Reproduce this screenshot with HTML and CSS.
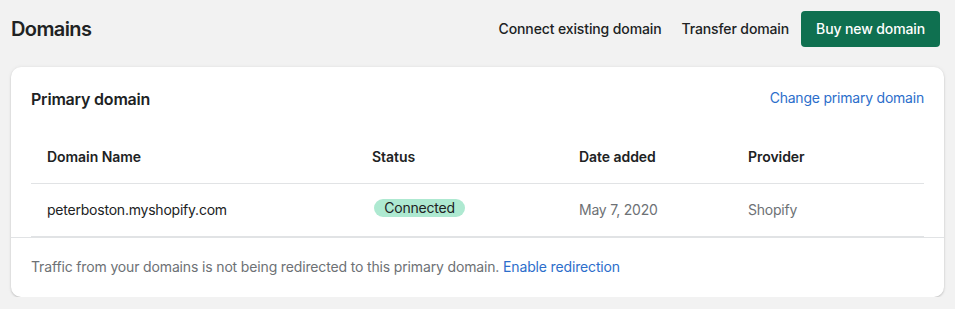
FILE: index.html
```html
<!DOCTYPE html>
<html lang="en">
<head>
<meta charset="utf-8">
<title>Domains</title>
<link rel="stylesheet" href="styles.css">
</head>
<body>
<div class="page">
  <header class="page-header">
    <h1 class="page-title">Domains</h1>
    <div class="actions">
      <button class="plain-btn">Connect existing domain</button>
      <button class="plain-btn">Transfer domain</button>
      <button class="primary-btn">Buy new domain</button>
    </div>
  </header>

  <section class="card">
    <div class="card-header">
      <h2 class="card-title">Primary domain</h2>
      <a class="link" href="#">Change primary domain</a>
    </div>
    <div class="table">
      <div class="row head">
        <div class="cell">Domain Name</div>
        <div class="cell">Status</div>
        <div class="cell">Date added</div>
        <div class="cell">Provider</div>
      </div>
      <div class="row body">
        <div class="cell">peterboston.myshopify.com</div>
        <div class="cell"><span class="badge">Connected</span></div>
        <div class="cell muted">May 7, 2020</div>
        <div class="cell muted">Shopify</div>
      </div>
    </div>
    <div class="card-footer">
      Traffic from your domains is not being redirected to this primary domain. <a class="link" href="#">Enable redirection</a>
    </div>
  </section>
</div>
</body>
</html>
```

FILE: styles.css
```css
* { box-sizing: border-box; }

html, body {
  margin: 0;
  padding: 0;
  background: #f2f2f2;
}

body {
  font-family: Inter, "Noto Sans", sans-serif;
  font-size: 14px;
  line-height: 20px;
  letter-spacing: -0.22px;
  color: #202223;
}

.page {
  padding: 11px 11px 0 11px;
}

.page-header {
  display: flex;
  align-items: center;
  justify-content: space-between;
  height: 36px;
  padding-right: 4px;
}

.page-title {
  margin: 0;
  font-size: 20px;
  line-height: 28px;
  font-weight: 600;
  letter-spacing: -0.6px;
  color: #202223;
}

.actions {
  display: flex;
  align-items: center;
}

.plain-btn {
  font-family: inherit;
  font-size: 14px;
  font-weight: 500;
  line-height: 20px;
  letter-spacing: -0.12px;
  color: #202223;
  background: none;
  border: 0;
  padding: 0;
  margin-right: 20px;
  white-space: nowrap;
  cursor: pointer;
}

.plain-btn + .plain-btn {
  margin-right: 12px;
}

.primary-btn {
  font-family: inherit;
  font-size: 14px;
  font-weight: 500;
  line-height: 20px;
  letter-spacing: -0.12px;
  color: #fff;
  background: #0f7050;
  border: 0;
  border-radius: 4px;
  height: 36px;
  padding: 0 15px;
  white-space: nowrap;
  cursor: pointer;
}

.card {
  margin-top: 20px;
  background: #fff;
  border-radius: 10px;
  box-shadow: 0 0 4px rgba(0, 0, 0, 0.06), 0 1px 2px rgba(0, 0, 0, 0.18);
  height: 230px;
  overflow: hidden;
}

.card-header {
  display: flex;
  justify-content: space-between;
  align-items: baseline;
  padding: 20px 20px 0 20px;
}

.card-title {
  margin: 0;
  font-size: 16px;
  line-height: 24px;
  font-weight: 600;
  letter-spacing: -0.2px;
}

.link {
  color: #2c6ecb;
  text-decoration: none;
}

.card-header .link {
  position: relative;
  top: -2px;
}

.table {
  margin: 20px 20px 0 20px;
}

.row {
  display: grid;
  grid-template-columns: 325px 207px 169px 1fr;
  border-bottom: 1px solid #e1e3e5;
}

.cell {
  padding: 16px 16px;
  line-height: 20px;
  height: 52px;
  white-space: nowrap;
}

.row.head .cell {
  font-weight: 600;
  letter-spacing: -0.05px;
}

.row.body {
  height: 53px;
}

.muted {
  color: #6d7175;
}

.badge {
  display: inline-block;
  margin-left: 2px;
  margin-top: -1px;
  vertical-align: top;
  background: #aee9d1;
  color: #202223;
  border-radius: 10px;
  padding: 0 10px;
  line-height: 18px;
  height: 18px;
  width: 91px;
  text-align: center;
}

.card-footer {
  border-top: 1px solid #e1e3e5;
  padding: 19px 20px;
  color: #6d7175;
  letter-spacing: -0.15px;
}
```
